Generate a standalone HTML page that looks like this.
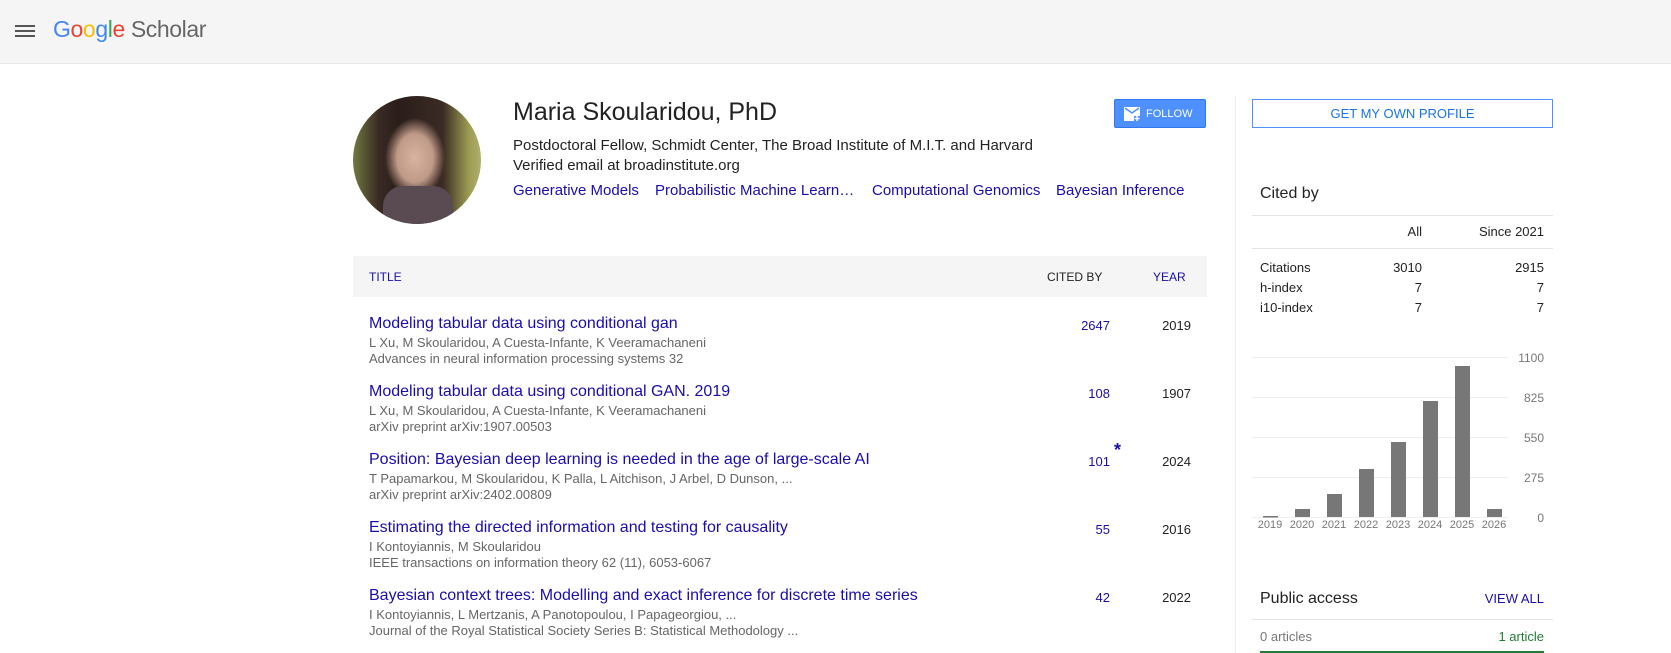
<!DOCTYPE html>
<html><head><meta charset="utf-8"><style>
body{margin:0;width:1671px;height:653px;overflow:hidden;background:#fff;font-family:"Liberation Sans",Arial,sans-serif;position:relative}
.a{position:absolute;white-space:nowrap}
.hdr{position:absolute;left:0;top:0;width:1671px;height:63px;background:#f5f5f5;border-bottom:1px solid #e6e6e6}
.hb{position:absolute;left:15px;width:20px;height:2px;background:#555}
a,.l{color:#1a0dab;text-decoration:none}
.t{font-size:16px;color:#1a0dab}
.au{font-size:13px;color:#666}
.num{font-size:13px;text-align:right}
.st{font-size:13px;color:#222}
</style></head><body>
<div class="hdr"></div>
<div class="hb" style="top:25px"></div><div class="hb" style="top:30px"></div><div class="hb" style="top:35px"></div>
<div class="a" style="left:53px;top:16px;font-size:23px;letter-spacing:-0.4px"><span style="color:#4285f4">G</span><span style="color:#ea4335">o</span><span style="color:#fbbc05">o</span><span style="color:#4285f4">g</span><span style="color:#34a853">l</span><span style="color:#ea4335">e</span><span style="color:#666"> Scholar</span></div>

<div class="a" style="left:353px;top:96px;width:128px;height:128px;border-radius:50%;overflow:hidden;background:radial-gradient(ellipse 30px 40px at 62px 62px,#d8b4a0 0,#c09a88 60%,rgba(0,0,0,0) 100%),linear-gradient(90deg,#6f7a40 0,#3a2a24 20%,#2a1e1a 35%,#3a2a24 70%,#9a9a50 90%,#b0b070 100%)"><div style="position:absolute;left:30px;top:90px;width:70px;height:40px;background:#5a4a52;border-radius:20px 20px 0 0"></div></div>

<div class="a" style="left:513px;top:98px;font-size:25px;color:#222">Maria Skoularidou, PhD</div>
<div class="a" style="left:513px;top:137px;font-size:15px;color:#222">Postdoctoral Fellow, Schmidt Center, The Broad Institute of M.I.T. and Harvard</div>
<div class="a" style="left:513px;top:157px;font-size:15px;color:#222">Verified email at broadinstitute.org</div>
<div class="a l" style="left:513px;top:182px;font-size:15px">Generative Models</div>
<div class="a l" style="left:655px;top:182px;font-size:15px">Probabilistic Machine Learn…</div>
<div class="a l" style="left:872px;top:182px;font-size:15px">Computational Genomics</div>
<div class="a l" style="left:1056px;top:182px;font-size:15px">Bayesian Inference</div>

<div class="a" style="left:1114px;top:99px;width:92px;height:29px;background:#4d90fe;border:1px solid #3079ed;border-radius:2px;box-sizing:border-box;color:#fff;font-size:11px">
<svg style="position:absolute;left:9px;top:6px" width="18" height="16" viewBox="0 0 18 16"><path d="M0 1h16v9h-6v5H0z" fill="#fff"/><path d="M1 2l7 5 7-5" stroke="#4d90fe" stroke-width="1.5" fill="none"/><path d="M13 10v5M10.5 12.5h5" stroke="#fff" stroke-width="1.5"/></svg>
<span style="position:absolute;left:31px;top:8px">FOLLOW</span></div>

<div class="a" style="left:353px;top:256px;width:854px;height:41px;background:#f5f5f5"></div>
<div class="a l" style="left:369px;top:270px;font-size:12px">TITLE</div>
<div class="a" style="left:1047px;top:270px;font-size:12px;color:#222">CITED BY</div>
<div class="a l" style="left:1153px;top:270px;font-size:12px">YEAR</div>

<div class="a t" style="left:369px;top:315px">Modeling tabular data using conditional gan</div>
<div class="a au" style="left:369px;top:335px">L Xu, M Skoularidou, A Cuesta-Infante, K Veeramachaneni</div>
<div class="a au" style="left:369px;top:351px">Advances in neural information processing systems 32</div>
<div class="a num l" style="left:1040px;width:70px;top:318px">2647</div><div class="a num" style="left:1120px;width:71px;top:318px;color:#222">2019</div>

<div class="a t" style="left:369px;top:383px">Modeling tabular data using conditional GAN. 2019</div>
<div class="a au" style="left:369px;top:403px">L Xu, M Skoularidou, A Cuesta-Infante, K Veeramachaneni</div>
<div class="a au" style="left:369px;top:419px">arXiv preprint arXiv:1907.00503</div>
<div class="a num l" style="left:1040px;width:70px;top:386px">108</div><div class="a num" style="left:1120px;width:71px;top:386px;color:#222">1907</div>

<div class="a t" style="left:369px;top:451px">Position: Bayesian deep learning is needed in the age of large-scale AI</div>
<div class="a au" style="left:369px;top:471px">T Papamarkou, M Skoularidou, K Palla, L Aitchison, J Arbel, D Dunson, ...</div>
<div class="a au" style="left:369px;top:487px">arXiv preprint arXiv:2402.00809</div>
<div class="a num l" style="left:1040px;width:70px;top:454px">101</div><div class="a l" style="left:1114px;top:440px;font-size:18px;font-weight:bold">*</div><div class="a num" style="left:1120px;width:71px;top:454px;color:#222">2024</div>

<div class="a t" style="left:369px;top:519px">Estimating the directed information and testing for causality</div>
<div class="a au" style="left:369px;top:539px">I Kontoyiannis, M Skoularidou</div>
<div class="a au" style="left:369px;top:555px">IEEE transactions on information theory 62 (11), 6053-6067</div>
<div class="a num l" style="left:1040px;width:70px;top:522px">55</div><div class="a num" style="left:1120px;width:71px;top:522px;color:#222">2016</div>

<div class="a t" style="left:369px;top:587px">Bayesian context trees: Modelling and exact inference for discrete time series</div>
<div class="a au" style="left:369px;top:607px">I Kontoyiannis, L Mertzanis, A Panotopoulou, I Papageorgiou, ...</div>
<div class="a au" style="left:369px;top:623px">Journal of the Royal Statistical Society Series B: Statistical Methodology ...</div>
<div class="a num l" style="left:1040px;width:70px;top:590px">42</div><div class="a num" style="left:1120px;width:71px;top:590px;color:#222">2022</div>

<div class="a" style="left:1235px;top:96px;width:1px;height:557px;background:#eee"></div>
<div class="a" style="left:1252px;top:99px;width:301px;height:29px;border:1px solid #4d90fe;box-sizing:border-box;color:#1a73e8;font-size:13px;text-align:center;line-height:27px">GET MY OWN PROFILE</div>

<div class="a" style="left:1260px;top:185px;font-size:16px;color:#222">Cited by</div>
<div class="a" style="left:1252px;top:215px;width:301px;height:1px;background:#e5e5e5"></div>
<div class="a st" style="left:1372px;width:50px;text-align:right;top:224px">All</div>
<div class="a st" style="left:1444px;width:100px;text-align:right;top:224px">Since 2021</div>
<div class="a" style="left:1252px;top:248px;width:301px;height:1px;background:#e5e5e5"></div>
<div class="a st" style="left:1260px;top:260px">Citations</div><div class="a st" style="left:1372px;width:50px;text-align:right;top:260px">3010</div><div class="a st" style="left:1444px;width:100px;text-align:right;top:260px">2915</div>
<div class="a st" style="left:1260px;top:280px">h-index</div><div class="a st" style="left:1372px;width:50px;text-align:right;top:280px">7</div><div class="a st" style="left:1444px;width:100px;text-align:right;top:280px">7</div>
<div class="a st" style="left:1260px;top:300px">i10-index</div><div class="a st" style="left:1372px;width:50px;text-align:right;top:300px">7</div><div class="a st" style="left:1444px;width:100px;text-align:right;top:300px">7</div>

<svg class="a" style="left:1252px;top:340px" width="300" height="200">
<g stroke="#eee" stroke-width="1"><line x1="0" x2="256" y1="17.5" y2="17.5"/><line x1="0" x2="256" y1="57.5" y2="57.5"/><line x1="0" x2="256" y1="97.5" y2="97.5"/><line x1="0" x2="256" y1="137.5" y2="137.5"/><line x1="0" x2="256" y1="177.5" y2="177.5"/></g>
<g fill="#777"><rect x="11" y="176" width="15" height="1.5"/><rect x="43" y="169" width="15" height="8"/><rect x="75" y="154" width="15" height="23"/><rect x="107" y="129" width="15" height="48"/><rect x="139" y="102" width="15" height="75"/><rect x="171" y="61" width="15" height="116"/><rect x="203" y="26" width="15" height="151"/><rect x="235" y="169" width="15" height="8"/></g>
<g font-family="Liberation Sans" font-size="12" fill="#777" text-anchor="end"><text x="292" y="22">1100</text><text x="292" y="62">825</text><text x="292" y="102">550</text><text x="292" y="142">275</text><text x="292" y="182">0</text></g>
<g font-family="Liberation Sans" font-size="11" fill="#777" text-anchor="middle"><text x="18" y="188">2019</text><text x="50" y="188">2020</text><text x="82" y="188">2021</text><text x="114" y="188">2022</text><text x="146" y="188">2023</text><text x="178" y="188">2024</text><text x="210" y="188">2025</text><text x="242" y="188">2026</text></g>
</svg>

<div class="a" style="left:1260px;top:590px;font-size:16px;color:#222">Public access</div>
<div class="a l" style="left:1444px;width:100px;text-align:right;top:591px;font-size:13px">VIEW ALL</div>
<div class="a" style="left:1252px;top:619px;width:301px;height:1px;background:#e5e5e5"></div>
<div class="a" style="left:1260px;top:629px;font-size:13px;color:#777">0 articles</div>
<div class="a" style="left:1444px;width:100px;text-align:right;top:629px;font-size:13px;color:#1e7e34">1 article</div>
<div class="a" style="left:1260px;top:651px;width:284px;height:2px;background:#1e7e34"></div>
</body></html>
